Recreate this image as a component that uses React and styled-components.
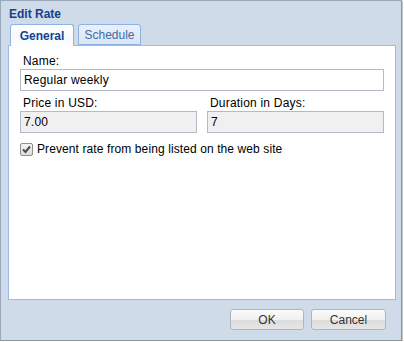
import React from "react";
import styled, { createGlobalStyle } from "styled-components";

const Global = createGlobalStyle`
  html, body {
    margin: 0;
    padding: 0;
    background: #ffffff;
    font-family: "Liberation Sans", Arial, sans-serif;
  }
`;

const Window = styled.div`
  box-sizing: border-box;
  width: 402px;
  height: 341px;
  background: #cfdbe8;
  border: 1px solid #99a8bb;
  border-right-color: #8b96a3;
  border-bottom-color: #8b96a3;
  box-shadow: 1px 1px 0 #c8c8c8;
  display: flex;
  flex-direction: column;
  padding: 0 5px 0 7px;
`;

const Title = styled.div`
  height: 22px;
  line-height: 26px;
  font-weight: bold;
  font-size: 12px;
  color: #15428b;
  padding-left: 1px;
`;

const TabStrip = styled.div`
  display: flex;
  align-items: flex-end;
  gap: 4px;
  height: 22px;
  padding-left: 2px;
  position: relative;
  z-index: 1;
`;

const Tab = styled.div`
  box-sizing: border-box;
  height: ${(p) => (p.active ? "22px" : "21px")};
  width: ${(p) => p.w}px;
  border: 1px solid #8db2e3;
  border-bottom: ${(p) => (p.active ? "none" : "1px solid #8db2e3")};
  border-radius: 3px 3px 0 0;
  background: ${(p) =>
    p.active
      ? "linear-gradient(#ffffff, #f5f9fe 60%, #ffffff)"
      : "linear-gradient(#e9f1fb, #d9e6f7)"};
  font-size: 12px;
  font-weight: ${(p) => (p.active ? "bold" : "normal")};
  color: ${(p) => (p.active ? "#15428b" : "#416aa3")};
  display: flex;
  align-items: center;
  justify-content: center;
  padding-top: 1px;
  margin-bottom: ${(p) => (p.active ? "-1px" : "0")};
`;

const Body = styled.div`
  box-sizing: border-box;
  height: 255px;
  background: #ffffff;
  border: 1px solid #99bbe8;
  padding: 8px 11px 0 11px;
  display: flex;
  flex-direction: column;
`;

const Field = styled.div`
  display: flex;
  flex-direction: column;
  flex: ${(p) => (p.grow ? 1 : "none")};
`;

const Label = styled.label`
  font-size: 12px;
  color: #000;
  padding-left: 3px;
  line-height: 15px;
  letter-spacing: 0.2px;
`;

const Input = styled.div`
  box-sizing: border-box;
  height: 22px;
  border: 1px solid #b5b8c8;
  background: ${(p) => (p.grey ? "#f0f0f0" : "#ffffff")};
  font-size: 12px;
  color: #000;
  line-height: 20px;
  padding-left: 3px;
  letter-spacing: 0.2px;
`;

const Row = styled.div`
  display: flex;
  gap: 10px;
  margin-top: ${(p) => p.mt || 0}px;
`;

const Check = styled.div`
  display: flex;
  align-items: center;
  gap: 4px;
  margin-top: 9px;
  font-size: 12px;
  letter-spacing: 0.1px;
`;

const Box = styled.span`
  box-sizing: border-box;
  width: 13px;
  height: 13px;
  border: 1px solid #8f8f8f;
  border-radius: 2px;
  background: linear-gradient(#f4f4f4, #dcdcdc);
  display: flex;
  align-items: center;
  justify-content: center;
`;

const Footer = styled.div`
  flex: 1;
  display: flex;
  justify-content: flex-end;
  align-items: flex-start;
  gap: 7px;
  padding: 9px 10px 0 0;
`;

const Button = styled.button`
  box-sizing: border-box;
  width: ${(p) => p.w}px;
  height: 21px;
  border: 1px solid #b4b4b4;
  border-radius: 3px;
  background: linear-gradient(#fbfbfb, #f0f0f0 50%, #dcdcdc 51%, #e6e6e6);
  font-family: "Liberation Sans", Arial, sans-serif;
  font-size: 12px;
  color: #333;
  padding: 0;
`;

export default function App() {
  return (
    <>
      <Global />
      <Window>
        <Title>Edit Rate</Title>
        <TabStrip>
          <Tab active w={64}>General</Tab>
          <Tab w={63}>Schedule</Tab>
        </TabStrip>
        <Body>
          <Field>
            <Label>Name:</Label>
            <Input>Regular weekly</Input>
          </Field>
          <Row mt={5}>
            <Field grow>
              <Label>Price in USD:</Label>
              <Input grey>7.00</Input>
            </Field>
            <Field grow>
              <Label>Duration in Days:</Label>
              <Input grey>7</Input>
            </Field>
          </Row>
          <Check>
            <Box>
              <svg width="9" height="9" viewBox="0 0 9 9">
                <path d="M1 4.5 L3.5 7 L8 1.5" fill="none" stroke="#4a4a4a" strokeWidth="2" />
              </svg>
            </Box>
            Prevent rate from being listed on the web site
          </Check>
        </Body>
        <Footer>
          <Button w={74}>OK</Button>
          <Button w={75}>Cancel</Button>
        </Footer>
      </Window>
    </>
  );
}
